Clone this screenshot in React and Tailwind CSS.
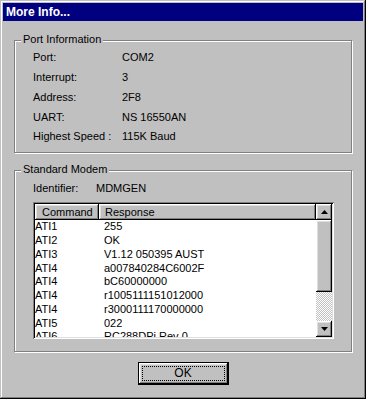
import React from 'react';

const raised =
  'shadow-[inset_-1px_-1px_0_#000,inset_1px_1px_0_#fff,inset_-2px_-2px_0_#808080,inset_2px_2px_0_#dfdfdf]';

const portRows = [
  ['Port:', 'COM2'],
  ['Interrupt:', '3'],
  ['Address:', '2F8'],
  ['UART:', 'NS 16550AN'],
  ['Highest Speed :', '115K Baud'],
];

const responses = [
  ['ATI1', '255'],
  ['ATI2', 'OK'],
  ['ATI3', 'V1.12 050395 AUST'],
  ['ATI4', 'a007840284C6002F'],
  ['ATI4', 'bC60000000'],
  ['ATI4', 'r1005111151012000'],
  ['ATI4', 'r3000111170000000'],
  ['ATI5', '022'],
  ['ATI6', 'RC288DPi Rev 0'],
];

const GroupBox = ({ title, className, children }) => (
  <div
    className={`relative border border-[#808080] shadow-[1px_1px_0_#fff,inset_1px_1px_0_#fff] ${className}`}
  >
    <span className="absolute left-[6px] top-[-8px] bg-[#c0c0c0] px-[2px] leading-[13px]">{title}</span>
    {children}
  </div>
);

const Arrow = ({ up }) => (
  <svg width="7" height="4" viewBox="0 0 7 4" className="block">
    {up ? <polygon points="3.5,0 7,4 0,4" fill="#000" /> : <polygon points="0,0 7,0 3.5,4" fill="#000" />}
  </svg>
);

export default function App() {
  return (
    <div
      className="w-[366px] h-[399px] bg-[#c0c0c0] p-[3px] text-[11px] text-black shadow-[inset_-1px_-1px_0_#000,inset_1px_1px_0_#c0c0c0,inset_-2px_-2px_0_#808080,inset_2px_2px_0_#fff] flex flex-col"
      style={{ fontFamily: '"Liberation Sans", Arial, sans-serif' }}
    >
      {/* Title bar */}
      <div className="h-[18px] bg-[#000080] text-white font-bold text-[12px] leading-[18px] pl-[3px] shrink-0">
        More Info...
      </div>

      <div className="px-[11px] flex flex-col">
        {/* Port Information */}
        <GroupBox title="Port Information" className="mt-[19px] h-[113px] pt-[7px] pl-[18px]">
          {portRows.map(([label, value]) => (
            <div key={label} className="flex h-[19.75px] items-center leading-[13px]">
              <span className="w-[89px]">{label}</span>
              <span>{value}</span>
            </div>
          ))}
        </GroupBox>

        {/* Standard Modem */}
        <GroupBox title="Standard Modem" className="mt-[17px] h-[182px] pt-[10px] pl-[18px]">
          <div className="flex h-[14px] items-center leading-[13px]">
            <span className="w-[63px]">Identifier:</span>
            <span>MDMGEN</span>
          </div>

          {/* List view */}
          <div className="mt-[7px] w-[301px] h-[137px] bg-white p-[2px] shadow-[inset_1px_1px_0_#808080,inset_-1px_-1px_0_#fff,inset_2px_2px_0_#000,inset_-2px_-2px_0_#dfdfdf] flex">
            <div className="flex-1 overflow-hidden flex flex-col">
              <div className="flex h-[16px] shrink-0 leading-[16px]">
                <div className={`w-[64px] pl-[7px] bg-[#c0c0c0] ${raised}`}>Command</div>
                <div className={`flex-1 pl-[6px] bg-[#c0c0c0] ${raised}`}>Response</div>
              </div>
              <div className="flex-1 overflow-hidden">
                {responses.map(([cmd, resp], i) => (
                  <div key={i} className="flex h-[13.75px] items-center leading-[13px]">
                    <span className="w-[69px]">{cmd}</span>
                    <span>{resp}</span>
                  </div>
                ))}
              </div>
            </div>

            {/* Scrollbar */}
            <div className="w-[16px] flex flex-col shrink-0">
              <div className={`h-[16px] bg-[#c0c0c0] flex items-center justify-center ${raised}`}>
                <Arrow up />
              </div>
              <div className={`h-[72px] bg-[#c0c0c0] ${raised}`} />
              <div className="flex-1 bg-[repeating-conic-gradient(#c0c0c0_0%_25%,#fff_0%_50%)] bg-[length:2px_2px]" />
              <div className={`h-[16px] bg-[#c0c0c0] flex items-center justify-center ${raised}`}>
                <Arrow />
              </div>
            </div>
          </div>
        </GroupBox>

        {/* OK button */}
        <div className="mt-[10px] flex justify-center">
          <button className="w-[91px] h-[23px] border border-black bg-[#c0c0c0] shadow-[inset_-1px_-1px_0_#000,inset_1px_1px_0_#fff,inset_-2px_-2px_0_#808080,inset_2px_2px_0_#dfdfdf] p-[3px]">
            <div className="h-full border border-dotted border-black flex items-center justify-center text-[12px] leading-[13px]">
              OK
            </div>
          </button>
        </div>
      </div>
    </div>
  );
}
